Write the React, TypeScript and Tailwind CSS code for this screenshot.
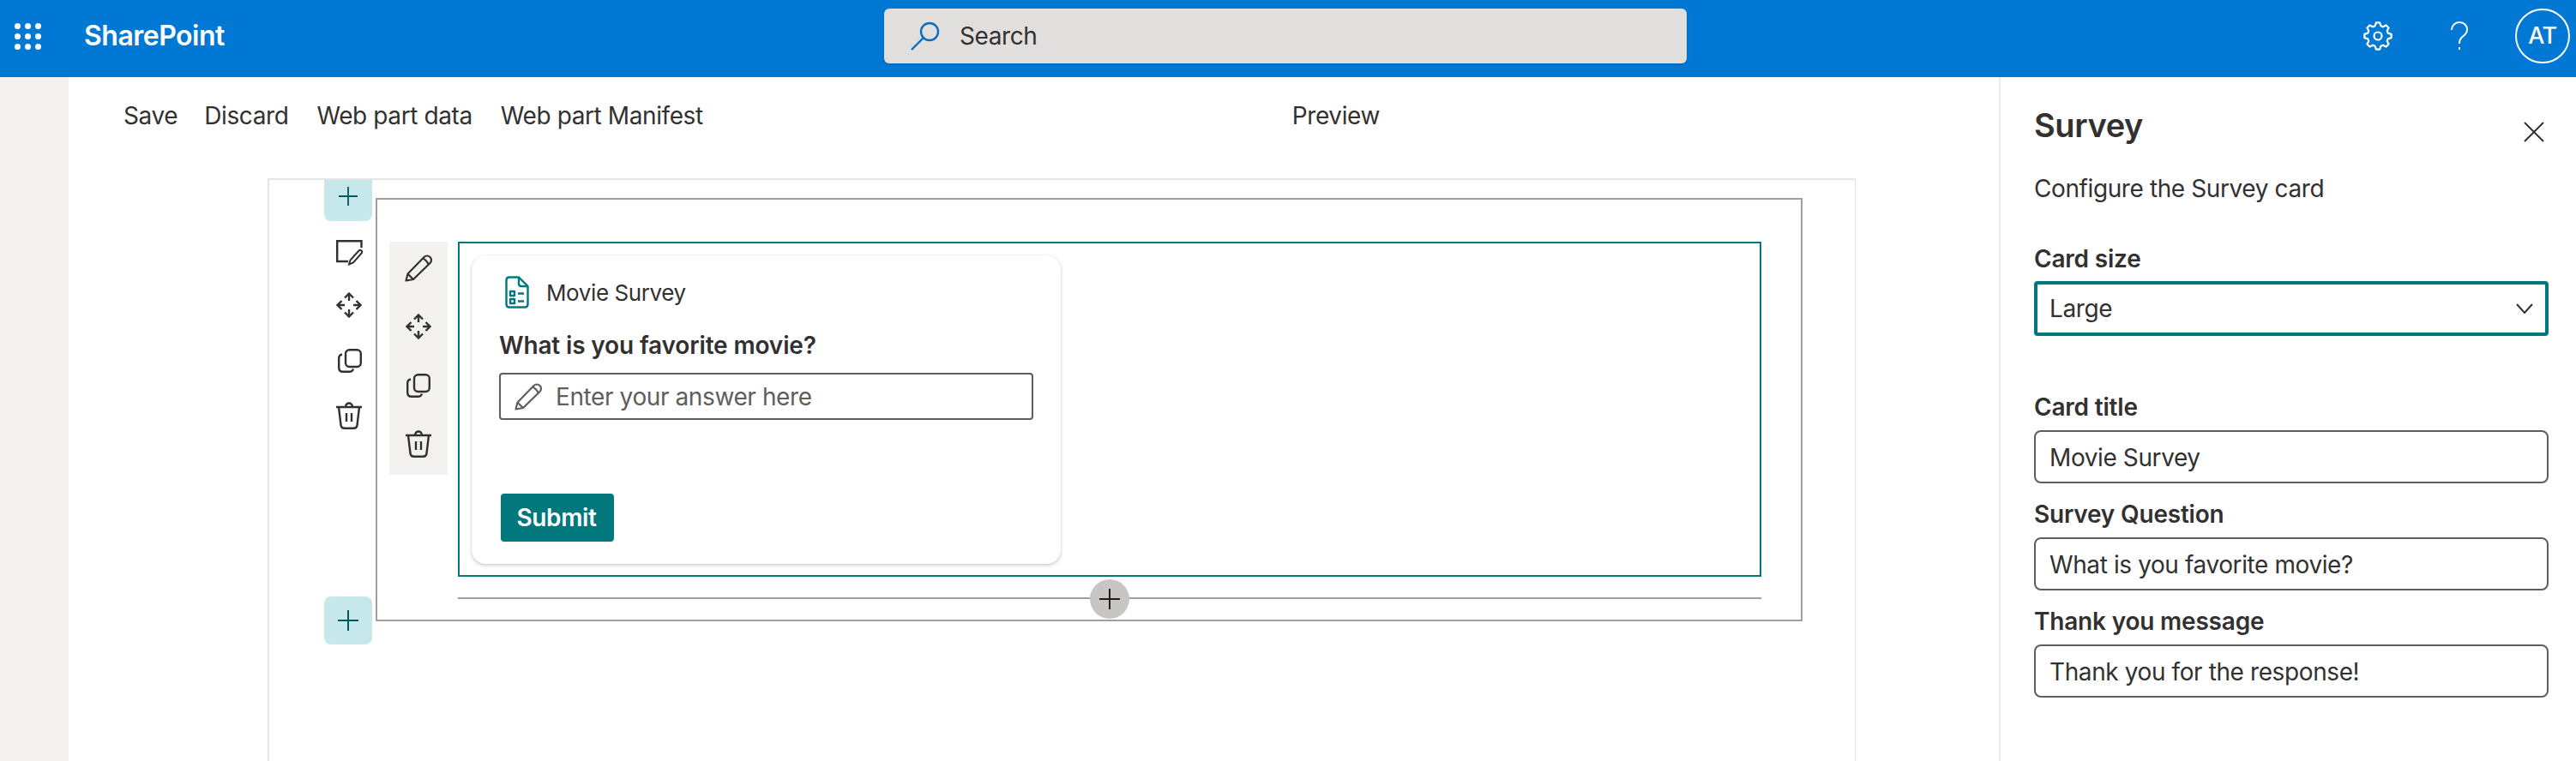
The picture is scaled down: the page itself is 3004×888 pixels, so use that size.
import React from 'react';

const pencilPath = 'M1.5 30.5 L3.5 22.5 L22.5 3 C24.5 1 27.5 1 29.5 3 C31.5 5 31.5 8 29.5 10 L10 29 Z M3.5 22.5 L10 29 M21 4.5 C23 5 27 9 27.5 11.5';

// 8 rounded teeth around the centre
function gearPath() {
  const pts: string[] = [];
  const teeth = 8;
  for (let i = 0; i < teeth; i++) {
    const a = (i / teeth) * Math.PI * 2;
    const step = (Math.PI * 2) / teeth;
    const corners: [number, number][] = [
      [12.2, a - step * 0.36],
      [15.8, a - step * 0.17],
      [15.8, a + step * 0.17],
      [12.2, a + step * 0.36],
    ];
    corners.forEach(([r, t]) => {
      const x = 17 + r * Math.cos(t);
      const y = 17 + r * Math.sin(t);
      pts.push(`${pts.length === 0 ? 'M' : 'L'}${x.toFixed(2)} ${y.toFixed(2)}`);
    });
  }
  return pts.join(' ') + ' Z';
}

function Plus({ size }: { size: number }) {
  return (
    <svg width={size} height={size} viewBox="0 0 24 24" fill="none" stroke="currentColor" strokeWidth="2">
      <path d="M12 0V24M0 12H24" />
    </svg>
  );
}

function Pencil({ color = 'text-[#323130]' }: { color?: string }) {
  return (
    <svg width="32" height="32" viewBox="0 0 32 32" fill="none" stroke="currentColor" strokeWidth="2.2" strokeLinejoin="round" className={color}>
      <path d={pencilPath} />
    </svg>
  );
}

function EditNote() {
  return (
    <svg width="32" height="30" viewBox="0 0 32 30" fill="none" stroke="#323130" strokeWidth="2.4">
      <path d="M29.5 9V1.2H1.2V25H14" />
      <path d="M15 28.5L16.5 23.5L26.5 12.5C28 11 31 12.5 30 15L20 26.5Z" strokeWidth="2" />
    </svg>
  );
}

function Move() {
  return (
    <svg width="30" height="30" viewBox="0 0 30 30" fill="none" stroke="#323130" strokeWidth="2.4">
      <path d="M15 1.5V10M10 6.5L15 1.5L20 6.5M15 20V28.5M10 23.5L15 28.5L20 23.5M1.5 15H10M6.5 10L1.5 15L6.5 20M20 15H28.5M23.5 10L28.5 15L23.5 20" />
    </svg>
  );
}

function Copy() {
  return (
    <svg width="28" height="28" viewBox="0 0 28 28" fill="none" stroke="#323130" strokeWidth="2.4">
      <rect x="9" y="1.2" width="17.8" height="19.8" rx="4.5" />
      <path d="M5 6.5C2.5 7 1.2 8.5 1.2 11V22C1.2 25 3 26.8 6 26.8H13C15.5 26.8 17.5 25.5 18 23.5" />
    </svg>
  );
}

function Trash() {
  return (
    <svg width="30" height="32" viewBox="0 0 30 32" fill="none" stroke="#323130" strokeWidth="2.4">
      <path d="M0 6H30M3 6L5.5 27C5.8 29.5 7.5 30.8 10 30.8H20C22.5 30.8 24.2 29.5 24.5 27L27 6M11 6C11 3 13 1.5 15 1.5C17 1.5 19 3 19 6M12 13V23M18 13V23" />
    </svg>
  );
}

function SurveyIcon() {
  return (
    <svg width="28" height="38" viewBox="0 0 28 38" fill="none" stroke="#03787c" strokeWidth="2.4" strokeLinejoin="round">
      <path d="M16 1.5H5C3 1.5 1.5 3 1.5 5V33C1.5 35 3 36.5 5 36.5H23C25 36.5 26.5 35 26.5 33V12Z" />
      <path d="M16 1.5V9C16 11 17 12 19 12H26.5" />
      <rect x="6" y="18" width="5" height="5" />
      <rect x="6" y="27" width="5" height="5" />
      <path d="M15 20.5H22M15 29.5H22" />
    </svg>
  );
}

function Field({ label, value }: { label: string; value: string }) {
  return (
    <div className="flex flex-col">
      <label className="text-[28px] leading-[36px] font-semibold tracking-[-0.2px] mb-[9px]">{label}</label>
      <div className="h-[62px] border-2 border-[#605e5c] rounded-lg flex items-center px-[16px] pt-[2px] text-[28px]">
        {value}
      </div>
    </div>
  );
}

export default function App() {
  return (
    <div className="w-[3004px] h-[888px] overflow-hidden flex flex-col bg-white tracking-[-0.4px] font-['Inter',sans-serif]">
      <header className="h-[90px] shrink-0 bg-[#0078d4] flex items-center pb-[6px] text-white">
        <div className="ml-[17px] w-[31px] grid grid-cols-3 gap-[5px]">
          {Array.from({ length: 9 }).map((_, i) => (
            <span key={i} className="w-[7px] h-[7px] rounded-full bg-white" />
          ))}
        </div>
        <span className="ml-[50px] text-[32px] font-semibold tracking-[-0.5px] w-[165px]">SharePoint</span>
        <div className="ml-[768px] w-[936px] h-[64px] bg-[#e1dfdd] rounded-md shadow-[0_2px_4px_rgba(0,0,0,0.12)] flex items-center pl-[31px] text-[#323130] text-[28px]">
          <svg width="34" height="34" viewBox="0 0 34 34" fill="none" stroke="#0f6cbd" strokeWidth="2.4">
            <circle cx="22" cy="12" r="10" />
            <path d="M15 19L1 33" />
          </svg>
          <span className="ml-[23px]">Search</span>
        </div>
        <svg width="34" height="34" viewBox="0 0 34 34" fill="none" stroke="#ffffff" strokeWidth="2.2" strokeLinejoin="round" className="ml-[789px]">
          <path d={gearPath()} />
          <circle cx="17" cy="17" r="4.5" />
        </svg>
        <svg width="20" height="34" viewBox="0 0 20 34" fill="none" stroke="#ffffff" strokeWidth="2" className="ml-[68px]">
          <path d="M1 10C1 5 5 1 10 1C15.5 1 19 5 19 9.5C19 14 16 16 13.5 18C11 20 10 21.5 10 26M10 30V33" />
        </svg>
        <div className="ml-[55px] w-[64px] h-[64px] rounded-full border-2 border-white flex items-center justify-center text-[27px] font-medium">
          AT
        </div>
      </header>

      <div className="flex-1 flex min-h-0">
        <div className="w-[80px] shrink-0 bg-[#f3f2f1]" />

        <main className="flex-1 flex flex-col min-w-0">
          <div className="h-[118px] shrink-0 pl-[64px] pt-[27px]">
            <div className="flex gap-[33px] text-[28px] leading-[36px] text-[#323130]">
              <span className="-mr-[2px]">Save</span>
              <span>Discard</span>
              <span>Web part data</span>
              <span>Web part Manifest</span>
              <span className="ml-[654px]">Preview</span>
            </div>
          </div>

          <div className="ml-[232px] w-[1852px] flex-1 border-t-2 border-l-2 border-r border-[#e5e5e5] flex pl-[64px] min-h-0">
            <div className="w-[56px] relative shrink-0">
              <div className="h-[48px] pb-[10px] bg-[#c7e8ea] rounded-b-lg flex items-center justify-center text-[#005b5f]">
                <Plus size={22} />
              </div>
              <div className="mt-[22px] ml-[14px] flex flex-col items-start">
                <EditNote />
                <div className="mt-[31px]"><Move /></div>
                <div className="mt-[36px] ml-[2px]"><Copy /></div>
                <div className="mt-[34px]"><Trash /></div>
              </div>
              <div className="absolute left-0 top-[486px] w-[56px] h-[56px] bg-[#c7e8ea] rounded-lg flex items-center justify-center text-[#005b5f]">
                <Plus size={24} />
              </div>
            </div>

            <section className="ml-[4px] mt-[21px] w-[1664px] h-[494px] shrink-0 border-2 border-[#a19f9d] flex pt-[49px] pl-[14px]">
              <div className="w-[68px] h-[272px] bg-[#f3f2f1] flex flex-col items-center pt-[15px] shrink-0">
                <Pencil />
                <div className="mt-[37px]"><Move /></div>
                <div className="mt-[40px]"><Copy /></div>
                <div className="mt-[38px]"><Trash /></div>
              </div>

              <div className="ml-[12px] w-[1520px] relative">
                <div className="h-[391px] border-2 border-[#03787c] pl-[14px] pt-[14px]">
                  <div className="w-[687px] h-[360px] bg-white rounded-2xl shadow-[0_2px_4px_rgba(0,0,0,0.18),0_0_2px_rgba(0,0,0,0.1)] flex flex-col px-[32px]">
                    <div className="flex items-center h-[60px] mt-[13px] pl-[7px]">
                      <SurveyIcon />
                      <span className="ml-[20px] text-[26px] text-[#323130]">Movie Survey</span>
                    </div>
                    <div className="mt-[14px] text-[28px] leading-[36px] font-semibold tracking-[-0.15px] text-[#323130]">What is you favorite movie?</div>
                    <div className="mt-[14px] h-[55px] border-2 border-[#605e5c] rounded flex items-center pl-[16px] text-[28px] text-[#605e5c]">
                      <Pencil color="text-[#605e5c]" />
                      <span className="ml-[16px] pt-[1px]">Enter your answer here</span>
                    </div>
                    <button className="mt-[86px] ml-[2px] w-[132px] h-[56px] pr-[2px] bg-[#03787c] rounded text-white text-[28px] font-semibold">Submit</button>
                  </div>
                </div>
                <div className="mt-[24px] h-[2px] bg-[#a19f9d]" />
                <div className="absolute left-[737px] top-[394px] w-[46px] h-[46px] rounded-full bg-[#c8c6c4] flex items-center justify-center text-[#201f1e]">
                  <Plus size={24} />
                </div>
              </div>
            </section>
          </div>
        </main>

        <aside className="w-[673px] shrink-0 border-l-2 border-[#edebe9] pl-[39px] pr-[32px] flex flex-col text-[#323130]">
          <div className="flex items-start justify-between pt-[31px] h-[100px]">
            <h1 className="text-[38px] leading-[50px] font-semibold">Survey</h1>
            <svg width="24" height="24" viewBox="0 0 24 24" fill="none" stroke="#323130" strokeWidth="2" className="mt-[21px] mr-[5px]">
              <path d="M1 1L23 23M23 1L1 23" />
            </svg>
          </div>
          <p className="mt-[12px] text-[28px] leading-[36px]">Configure the Survey card</p>
          <label className="mt-[46px] text-[28px] leading-[36px] font-semibold tracking-[-0.2px]">Card size</label>
          <div className="mt-[8px] h-[64px] border-4 border-[#03787c] rounded flex items-center justify-between pl-[14px] pr-[14px] text-[28px]">
            <span>Large</span>
            <svg width="20" height="12" viewBox="0 0 20 12" fill="none" stroke="#323130" strokeWidth="2">
              <path d="M1 1L10 11L19 1" />
            </svg>
          </div>
          <div className="mt-[65px] flex flex-col gap-[18px]">
            <Field label="Card title" value="Movie Survey" />
            <Field label="Survey Question" value="What is you favorite movie?" />
            <Field label="Thank you message" value="Thank you for the response!" />
          </div>
        </aside>
      </div>
    </div>
  );
}
